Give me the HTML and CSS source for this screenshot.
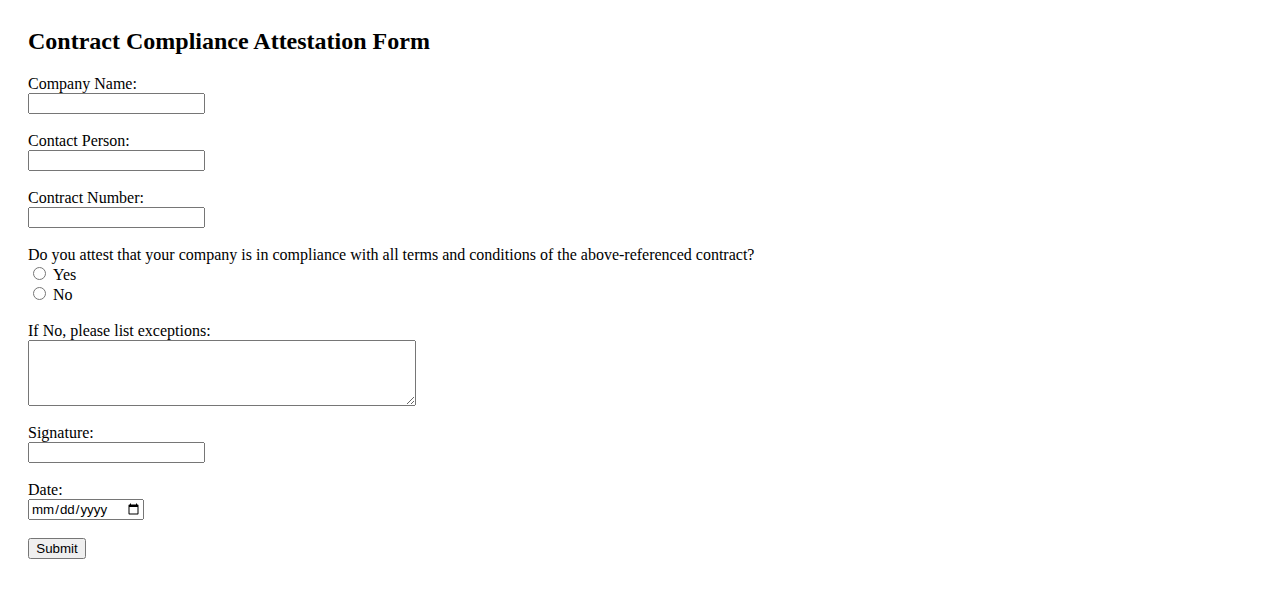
FILE: index.html
```html
<!DOCTYPE html>
<html lang="en">
<head>
<meta charset="utf-8">
<title>Contract Compliance Attestation Form</title>
<link rel="stylesheet" href="styles.css">
</head>
<body>
<div class="page">
  <h2 class="title">Contract Compliance Attestation Form</h2>
  <form class="form">
    <div class="field">
      <label class="label" for="company">Company Name:</label>
      <input class="text-input" type="text" id="company" name="company">
    </div>
    <div class="field">
      <label class="label" for="contact">Contact Person:</label>
      <input class="text-input" type="text" id="contact" name="contact">
    </div>
    <div class="field">
      <label class="label" for="contract">Contract Number:</label>
      <input class="text-input" type="text" id="contract" name="contract">
    </div>
    <div class="field">
      <span class="label">Do you attest that your company is in compliance with all terms and conditions of the above-referenced contract?</span>
      <div class="option"><input class="radio" type="radio" id="yes" name="attest" value="yes"><label for="yes">Yes</label></div>
      <div class="option"><input class="radio" type="radio" id="no" name="attest" value="no"><label for="no">No</label></div>
    </div>
    <div class="field">
      <label class="label" for="exceptions">If No, please list exceptions:</label>
      <textarea class="textarea" id="exceptions" name="exceptions"></textarea>
    </div>
    <div class="field">
      <label class="label" for="signature">Signature:</label>
      <input class="text-input" type="text" id="signature" name="signature">
    </div>
    <div class="field">
      <label class="label" for="date">Date:</label>
      <input class="date-input" type="date" id="date" name="date">
    </div>
    <div class="field">
      <button class="submit" type="submit">Submit</button>
    </div>
  </form>
</div>
</body>
</html>
```
FILE: styles.css
```css
html, body {
  margin: 0;
  padding: 0;
  background: #ffffff;
}

body {
  font-family: "Liberation Serif", "Times New Roman", serif;
  font-size: 16px;
  color: #000000;
}

.page {
  padding: 28px;
}

.title {
  font-size: 24px;
  font-weight: bold;
  line-height: 27.6px;
  margin: 0 0 19px 0;
}

.form {
  margin: 0;
}

.field {
  margin-bottom: 17.6px;
}

.label {
  display: block;
  line-height: 18.4px;
}

.text-input {
  display: block;
  box-sizing: border-box;
  width: 177px;
  height: 21px;
  margin: 0;
  font-family: "Liberation Sans", Arial, sans-serif;
  font-size: 13.333px;
}

.option {
  display: flex;
  align-items: flex-end;
  height: 20px;
  line-height: 18.4px;
}

.radio {
  width: 13px;
  height: 13px;
  margin: 0 7px 4px 5px;
}

.textarea {
  display: block;
  box-sizing: border-box;
  width: 388px;
  height: 66px;
  margin: 0;
  font-family: "Liberation Mono", "Courier New", monospace;
  font-size: 13.333px;
}

.date-input {
  display: block;
  box-sizing: border-box;
  width: 116px;
  height: 21px;
  margin: 0;
  font-family: "Liberation Sans", Arial, sans-serif;
  font-size: 13.333px;
}

.submit {
  display: block;
  box-sizing: border-box;
  width: 58px;
  height: 21px;
  margin: 0;
  padding: 1px 6px;
  font-family: "Liberation Sans", Arial, sans-serif;
  font-size: 13.333px;
}
```
